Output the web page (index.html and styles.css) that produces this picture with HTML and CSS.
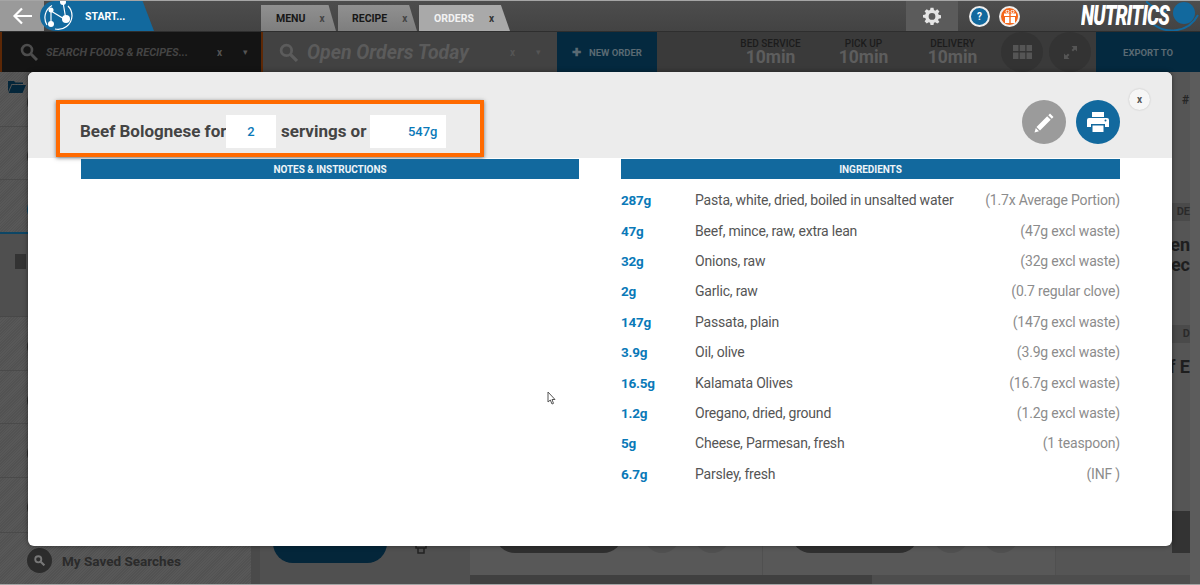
FILE: index.html
```html
<!DOCTYPE html>
<html lang="en">
<head>
<meta charset="utf-8">
<title>Nutritics</title>
<link rel="stylesheet" href="styles.css">
</head>
<body>
<div class="app">
  <header class="topbar">
    <button class="back" aria-label="Back">
      <svg width="22" height="18" viewBox="0 0 22 18"><path d="M10 1.500 2.500 9l7.500 7.500M3 9h17" fill="none" stroke="#fff" stroke-width="2.200"/></svg>
    </button>
    <div class="start">
      <svg class="start-logo" width="34" height="34" viewBox="0 0 34 34"><g fill="none" stroke="#fff" stroke-width="1.200"><path d="M10 7.500A14 14 0 0 0 5 27M13 31a14 14 0 0 0 17-13 14 14 0 0 0-4-10"/><path d="M9 25V13l15 9L21 4"/></g><circle cx="21" cy="4" r="3" fill="#fff"/><circle cx="9" cy="12" r="2.500" fill="#fff"/><circle cx="24" cy="21" r="4" fill="#fff"/><circle cx="9" cy="26" r="3" fill="#fff"/></svg>
      <span>START...</span>
    </div>
    <nav class="tabs">
      <div class="tab tab-menu"><span>MENU</span><i>x</i></div>
      <div class="tab tab-recipe"><span>RECIPE</span><i>x</i></div>
      <div class="tab tab-orders"><span>ORDERS</span><i>x</i></div>
    </nav>
    <div class="gear">
      <svg width="18" height="18" viewBox="0 0 24 24"><path fill="#e4e4e4" fill-rule="evenodd" d="M10 1h4l.6 3.100 1.800.8L19 3.100 21.900 6l-1.800 2.600.8 1.800L24 11v4l-3.100.6-.8 1.800 1.800 2.600L19 22l-2.600-1.800-1.800.8L14 24h-4l-.6-3-1.800-.8L5 22l-2.900-2.900 1.800-2.600-.8-1.800L0 14v-3.500l3.100-.6.8-1.800L2.100 5.500 5 3l2.600 1.800 1.800-.8zM12 8a4.500 4.500 0 1 0 0 9 4.500 4.500 0 0 0 0-9z"/></svg>
    </div>
    <div class="round help">?</div>
    <div class="round gift">
      <svg width="12" height="13" viewBox="0 0 12 13"><path fill="#fff" d="M0 3.500h5.300V6H0zM6.700 3.500H12V6H6.700zM1 7h4.300v6H1zM6.700 7H11v6H6.700z"/><circle cx="3.500" cy="1.700" r="1.500" fill="none" stroke="#fff"/><circle cx="8.500" cy="1.700" r="1.500" fill="none" stroke="#fff"/></svg>
    </div>
    <div class="brand">
      <svg class="brand-mark" width="55" height="30" viewBox="0 0 55 30"><g fill="none" stroke="#12699e" stroke-width="2"><path d="M0 0C5 6 12 9 20 11"/><path d="M6 22C18 33 42 33 52 14"/></g><circle cx="38" cy="12" r="11" fill="#12699e"/></svg>
      <span>NUTRITICS</span>
    </div>
  </header>

  <section class="subbar">
    <div class="search-main">
      <svg class="mag" width="18" height="18" viewBox="0 0 18 18"><circle cx="7" cy="7" r="5" fill="none" stroke="#4d4d4d" stroke-width="2.600"/><path d="m11 11 6 6" stroke="#4d4d4d" stroke-width="3"/></svg>
      <span class="search-text">SEARCH FOODS &amp; RECIPES...</span>
      <span class="clear">x</span>
      <span class="caret">▾</span>
    </div>
    <div class="search-orders">
      <svg class="mag" width="19" height="19" viewBox="0 0 18 18"><circle cx="7" cy="7" r="5" fill="none" stroke="#5c5c5c" stroke-width="2.600"/><path d="m11 11 6 6" stroke="#5c5c5c" stroke-width="3"/></svg>
      <span class="orders-text">Open Orders Today</span>
      <span class="clear">x</span>
      <span class="caret">▾</span>
    </div>
    <div class="new-order"><b>✚</b><span>NEW ORDER</span></div>
    <div class="stats">
      <div class="stat stat-bed"><small>BED SERVICE</small><strong>10min</strong></div>
      <div class="stat stat-pick"><small>PICK UP</small><strong>10min</strong></div>
      <div class="stat stat-del"><small>DELIVERY</small><strong>10min</strong></div>
    </div>
    <div class="disc">
      <svg width="19" height="14" viewBox="0 0 19 14"><path fill="#555" d="M0 0h5.500v6H0zM6.700 0h5.600v6H6.700zM13.500 0H19v6h-5.500zM0 7.500h5.500V14H0zM6.700 7.500h5.600V14H6.700zM13.500 7.500H19V14h-5.500z"/></svg>
    </div>
    <div class="disc disc-two">
      <svg width="13" height="13" viewBox="0 0 13 13"><path fill="#555" d="M7.500 0H13v5.500L11 3.500 9 5.500 7.500 4 9.500 2zM0 7.500l2 2L4 7.500 5.500 9l-2 2 2 2H0z"/></svg>
    </div>
    <div class="export">EXPORT TO</div>
  </section>

  <main class="workspace">
    <aside class="sidebar">
      <div class="side-row side-folder">
        <svg width="18" height="13" viewBox="0 0 18 13"><path fill="#04263a" d="M0 1h6l1.500 1.500H15V4H3.500L0 12zM4 5h14l-3.500 8H.7z"/></svg>
        <span class="dot"></span>
      </div>
      <div class="side-row side-short"><span class="dot"></span></div>
      <div class="side-row side-blue"><span class="dot dot-blue"></span></div>
      <div class="side-panel"><span class="chip"></span></div>
      <div class="side-row"><span class="dot"></span></div>
      <div class="side-row"><span class="dot"></span></div>
      <div class="side-row"><span class="dot"></span></div>
      <div class="side-row side-tall"><span class="dot"></span></div>
      <div class="saved">
        <span class="saved-icon"><svg width="11" height="11" viewBox="0 0 18 18"><circle cx="7" cy="7" r="5" fill="none" stroke="#777" stroke-width="3"/><path d="m11 11 6 6" stroke="#777" stroke-width="3.500"/></svg></span>
        <span>My Saved Searches</span>
      </div>
    </aside>
    <div class="gutter"></div>
    <section class="middle">
      <div class="middle-pill"></div>
      <svg class="middle-icon" width="14" height="16" viewBox="0 0 14 16"><path d="M2 0v10h10V0M4 10v5h6v-5" fill="none" stroke="#222" stroke-width="1.500"/></svg>
    </section>
    <section class="board">
      <div class="board-main">
        <div class="board-col col-a"><span class="pill"></span><span class="bump"></span><span class="bump"></span></div>
        <div class="board-col col-b"><span class="pill"></span><span class="bump"></span><span class="bump"></span></div>
        <div class="board-col col-c">
          <span class="hash">#</span>
          <span class="tag tag-de">DE</span>
          <span class="big big-one">len<br>hec</span>
          <span class="tag tag-d">D</span>
          <span class="big big-two">f E</span>
          <span class="dark-block"></span>
        </div>
      </div>
      <div class="board-scroll"><span></span></div>
    </section>
    <div class="rail"></div>
  </main>

  <div class="modal">
    <div class="modal-head">
      <div class="highlight">
        <span class="t-name">Beef Bolognese for</span>
        <span class="field field-serv">2</span>
        <span class="t-mid">servings or</span>
        <span class="field field-weight">547g</span>
      </div>
      <div class="actions">
        <button class="act act-edit" aria-label="Edit">
          <svg width="21" height="21" viewBox="0 0 21 21"><path fill="#fff" d="M16 1.500 19.500 5 17.800 6.700 14.300 3.200zM13.200 4.300 16.700 7.800 6 18.500 2.500 15zM1.800 16 5 19.200.5 20.500z"/></svg>
        </button>
        <button class="act act-print" aria-label="Print">
          <svg width="22" height="20" viewBox="0 0 22 20"><path fill="#fff" fill-rule="evenodd" d="M5 0h12v5H5zM2 6h18a2 2 0 0 1 2 2v7h-4v-3H4v3H0V8a2 2 0 0 1 2-2zm16.500 1.500a1 1 0 1 0 0 2 1 1 0 0 0 0-2zM5.500 13.500h11V20h-11z"/></svg>
        </button>
      </div>
      <button class="close">x</button>
    </div>
    <div class="modal-body">
      <section class="notes">
        <h2>NOTES &amp; INSTRUCTIONS</h2>
      </section>
      <section class="ingredients">
        <h2>INGREDIENTS</h2>
        <ul>
          <li><b>287g</b><span>Pasta, white, dried, boiled in unsalted water</span><em>(1.7x Average Portion)</em></li>
          <li><b>47g</b><span>Beef, mince, raw, extra lean</span><em>(47g excl waste)</em></li>
          <li><b>32g</b><span>Onions, raw</span><em>(32g excl waste)</em></li>
          <li><b>2g</b><span>Garlic, raw</span><em>(0.7 regular clove)</em></li>
          <li><b>147g</b><span>Passata, plain</span><em>(147g excl waste)</em></li>
          <li><b>3.9g</b><span>Oil, olive</span><em>(3.9g excl waste)</em></li>
          <li><b>16.5g</b><span>Kalamata Olives</span><em>(16.7g excl waste)</em></li>
          <li><b>1.2g</b><span>Oregano, dried, ground</span><em>(1.2g excl waste)</em></li>
          <li><b>5g</b><span>Cheese, Parmesan, fresh</span><em>(1 teaspoon)</em></li>
          <li><b>6.7g</b><span>Parsley, fresh</span><em>(INF )</em></li>
        </ul>
      </section>
      <svg class="cursor" width="10" height="14" viewBox="0 0 10 14"><path d="M1 1v10l2.300-2 1.700 4 1.500-.6L5 8.500h3z" fill="#fff" stroke="#555" stroke-width="1"/></svg>
    </div>
  </div>
</div>
</body>
</html>
```

FILE: styles.css
```css
* { box-sizing: border-box; }
html, body { margin: 0; padding: 0; height: 100%; overflow: hidden; }
body { font-family: Roboto, "Liberation Sans", sans-serif; background: #555; }
button { border: 0; padding: 0; font: inherit; }
h2, ul { margin: 0; padding: 0; }

.app {
  position: relative;
  width: 1200px;
  height: 585px;
  display: flex;
  flex-direction: column;
  overflow: hidden;
  border-top: 1px solid #a5a5a5;
  border-bottom: 1px solid #a5a5a5;
}

/* top bar */
.topbar {
  height: 31px;
  display: flex;
  align-items: stretch;
  background: linear-gradient(#4d4d4d, #434343);
  border-bottom: 1px solid #2e2e2e;
}
.back {
  width: 44px;
  margin-right: -4px;
  background: #9a9a9a;
  display: flex;
  align-items: center;
  padding-left: 12px;
}
.start {
  width: 114px;
  height: 30px;
  background: #12699e;
  border-radius: 15px 0 0 15px;
  clip-path: polygon(0 0, 90% 0, 100% 100%, 0 100%);
  display: flex;
  align-items: center;
  color: #fff;
  font-weight: 700;
  font-size: 10.500px;
  gap: 9px;
}
.start-logo { margin-left: 2px; flex: none; margin-top: -2px; }
.tabs { display: flex; gap: 2px; margin-left: 107px; align-items: flex-end; width: 249px; }
.tab {
  height: 26px;
  display: flex;
  align-items: center;
  font-size: 10.500px;
  font-weight: 700;
  color: #171717;
  background: linear-gradient(#909090, #7e7e7e);
  clip-path: polygon(0 0, 90% 0, 100% 100%, 0 100%);
}
.tab-menu { width: 75px; padding-left: 15px; }
.tab-recipe { width: 79px; padding-left: 14px; }
.tab-orders { width: 91px; padding-left: 15px; color: #f2f2f2; background: #a9a9a9; }
.tab i { font-style: normal; color: #444; margin-left: 14px; font-size: 10px; }
.tab-recipe i { margin-left: 15px; }
.tab-orders i { margin-left: 15px; color: #333; }
.gear {
  width: 52px;
  margin-left: 396px;
  background: #5b5b5b;
  display: flex;
  align-items: center;
  justify-content: center;
}
.round {
  width: 21px;
  height: 21px;
  border-radius: 50%;
  align-self: center;
  display: flex;
  align-items: center;
  justify-content: center;
  border: 2px solid #eee;
  color: #fff;
  font-weight: 700;
  font-size: 10px;
}
.help { background: #12699e; margin-left: 11px; }
.gift { background: #f4661b; margin-left: 9px; }
.brand {
  position: relative;
  flex: 1;
  display: flex;
  align-items: center;
  margin-left: 61px;
  overflow: hidden;
}
.brand span {
  position: relative;
  color: #fff;
  font-size: 27px;
  font-weight: 900;
  font-style: italic;
  letter-spacing: -1.200px;
  white-space: nowrap;
  display: inline-block;
  transform: scaleX(.71);
  transform-origin: left center;
}
.brand-mark { position: absolute; left: 65px; top: 0; }

/* second bar */
.subbar {
  height: 40px;
  display: flex;
  align-items: stretch;
  background: #3a3a3a;
}
.search-main {
  width: 263px;
  background: #141414;
  border-left: 2px solid #5d2806;
  border-right: 2px solid #5d2806;
  display: flex;
  align-items: center;
  padding-left: 18px;
}
.search-text {
  font-size: 11px;
  font-weight: 700;
  font-style: italic;
  color: #444;
  margin-left: 8px;
  width: 171px;
  white-space: nowrap;
}
.clear { font-size: 10px; font-weight: 700; color: #555; }
.caret { font-size: 9px; color: #555; margin-left: 21px; }
.search-orders {
  width: 294px;
  background: #424242;
  display: flex;
  align-items: center;
  padding-left: 16px;
}
.orders-text {
  font-size: 19.500px;
  font-weight: 700;
  font-style: italic;
  color: #5b5b5b;
  margin-left: 9px;
  width: 203px;
  white-space: nowrap;
}
.new-order {
  width: 100px;
  background: #04293f;
  display: flex;
  align-items: center;
  padding-left: 15px;
  gap: 8px;
  font-size: 9.500px;
  font-weight: 700;
  color: #5a6a73;
}
.new-order b { font-size: 11px; }
.stats { width: 344px; display: flex; }
.stat { display: flex; flex-direction: column; align-items: center; padding-top: 6px; }
.stat small { font-size: 10px; line-height: 12px; color: #1c1c1c; font-weight: 500; white-space: nowrap; }
.stat strong { font-size: 17.500px; line-height: 15px; color: #5d5d5d; font-weight: 700; }
.stat-bed { width: 93px; margin-left: 67px; }
.stat-pick { width: 93px; }
.stat-del { width: 85px; }
.disc {
  width: 42px;
  height: 40px;
  border-radius: 50%;
  background: #333;
  display: flex;
  align-items: center;
  justify-content: center;
}
.disc-two { margin-left: 6px; }
.export {
  width: 104px;
  margin-left: 5px;
  background: #04293f;
  color: #5a6a73;
  font-size: 9.500px;
  font-weight: 700;
  display: flex;
  align-items: center;
  justify-content: center;
}

/* background workspace */
.workspace { flex: 1; display: flex; min-height: 0; }
.sidebar {
  width: 251px;
  display: flex;
  flex-direction: column;
  background: repeating-linear-gradient(135deg, #585858 0 1px, #525252 1px 2px);
}
.side-row {
  height: 53.500px;
  border-bottom: 1px solid #4a4a4a;
  padding: 7px 0 0 27px;
  flex: none;
}
.side-short { height: 53px; }
.side-folder { height: 55px; padding: 8px 0 0 8px; display: flex; align-items: flex-start; }
.side-folder .dot { margin: 10px 0 0 1px; }
.side-blue { height: 54px; border-bottom: 2px solid #0d4665; }
.side-tall { height: 55px; }
.dot { display: block; width: 25px; height: 25px; margin-top: 10px; border-radius: 50%; background: #2c2c2c; flex: none; }
.dot-blue { background: #0d4665; }
.side-panel { height: 83px; background: #4f4f4f; padding: 20px 0 0 15px; flex: none; border-bottom: 1px solid #484848; }
.chip { display: block; width: 11px; height: 15px; background: #333; }
.saved {
  flex: 1;
  display: flex;
  align-items: center;
  padding: 5px 0 0 27px;
  gap: 10px;
  font-size: 13.500px;
  font-weight: 700;
  color: #2b2b2b;
}
.saved-icon {
  width: 25px;
  height: 25px;
  border-radius: 50%;
  background: #2c2c2c;
  display: flex;
  align-items: center;
  justify-content: center;
}
.gutter { width: 9px; background: #4a4a4a; }
.middle { width: 210px; background: #505050; display: flex; align-items: flex-end; padding: 0 0 21px 13px; }
.middle-pill { width: 114px; height: 40px; background: #04263a; border-radius: 0 0 20px 20px; }
.middle-icon { margin: 0 0 9px 27px; }
.board { flex: 1; display: flex; flex-direction: column; background: #585858; }
.board-main { flex: 1; display: flex; min-height: 0; }
.board-col { display: flex; align-items: flex-end; padding-bottom: 22px; border-right: 1px solid #505050; gap: 14px; }
.col-a { width: 293px; padding-left: 25px; }
.col-b { width: 293px; padding-left: 28px; }
.col-c { position: relative; flex: 1; border-right: 0; background: #555; }
.pill { width: 128px; height: 40px; background: #2f2f2f; border-radius: 0 0 20px 20px; }
.bump { width: 36px; height: 40px; background: #505050; border-radius: 0 0 18px 18px; }
.col-a .pill { margin-right: 7px; }
.hash { position: absolute; right: 1px; top: 21px; color: #262626; font-weight: 700; font-size: 12px; }
.tag { position: absolute; right: 0; background: #4a4a4a; color: #2a2a2a; font-weight: 700; font-size: 11px; height: 18px; line-height: 18px; width: 18px; text-align: right; padding-right: 0; white-space: nowrap; }
.tag-de { top: 131px; }
.tag-d { top: 253px; padding-right: 0; }
.big { position: absolute; right: 0; color: #1e1e1e; font-weight: 700; font-size: 18px; line-height: 20px; white-space: nowrap; text-align: right; }
.big-one { top: 163px; }
.big-two { top: 285px; }
.dark-block { position: absolute; right: 0; width: 18px; top: 439px; bottom: 22px; background: #333; }
.board-scroll { height: 9px; background: #4d4d4d; }
.board-scroll span { display: block; width: 402px; height: 9px; background: #404040; }
.rail { width: 10px; background: #5c5c5c; }

/* modal */
.modal {
  position: absolute;
  left: 28px;
  top: 71px;
  width: 1144px;
  height: 474px;
  background: #fff;
  border-radius: 6px;
  box-shadow: 0 0 5px rgba(0, 0, 0, .45);
  overflow: hidden;
}
.modal-head {
  position: relative;
  height: 86px;
  background: #ececec;
  display: flex;
  justify-content: space-between;
  padding: 28px 52px 0 28px;
}
.highlight {
  width: 428px;
  height: 57px;
  border: 4px solid #ff6a00;
  box-shadow: 0 1px 4px rgba(0, 0, 0, .5);
  display: flex;
  align-items: center;
  padding: 5px 0 0 20px;
  font-size: 17px;
  font-weight: 700;
  color: #444;
}
.t-name { width: 146px; white-space: nowrap; }
.t-mid { margin: 0 4px 0 5px; white-space: nowrap; }
.field {
  background: #fff;
  height: 33px;
  display: flex;
  align-items: center;
  font-size: 13px;
  font-weight: 500;
  color: #0a79b8;
}
.field-serv { width: 50px; justify-content: center; }
.field-weight { width: 76px; justify-content: flex-end; padding-right: 9px; }
.actions { display: flex; gap: 10px; }
.act {
  width: 44px;
  height: 44px;
  border-radius: 50%;
  display: flex;
  align-items: center;
  justify-content: center;
}
.act-edit { background: #9b9b9b; }
.act-print { background: #12699e; }
.close {
  position: absolute;
  right: 22px;
  top: 17px;
  width: 21px;
  height: 21px;
  border-radius: 50%;
  background: #f6f6f6;
  box-shadow: 0 0 2px rgba(0, 0, 0, .2);
  font-size: 10px;
  font-weight: 700;
  color: #555;
  line-height: 19px;
}
.modal-body {
  position: relative;
  flex: 1;
  display: flex;
  gap: 42px;
  padding: 1px 52px 0 53px;
}
.notes, .ingredients { width: 499px; }
.notes { width: 498px; }
h2 {
  height: 20px;
  background: #12699e;
  color: #eef4f8;
  font-size: 10px;
  font-weight: 700;
  line-height: 21px;
  letter-spacing: -.05px;
  text-align: center;
}
.ingredients ul { list-style: none; margin-top: 6px; }
.ingredients li {
  display: flex;
  height: 30.400px;
  align-items: center;
  font-size: 14px;
  color: #555;
  white-space: nowrap;
}
.ingredients b { width: 74px; color: #0a79b8; font-size: 13.500px; letter-spacing: -.25px; font-weight: 700; flex: none; }
.ingredients span { flex: 1; letter-spacing: -.2px; }
.ingredients em { font-style: normal; color: #8c8c8c; letter-spacing: -.18px; }
.cursor { position: absolute; left: 519px; top: 233px; }
```
